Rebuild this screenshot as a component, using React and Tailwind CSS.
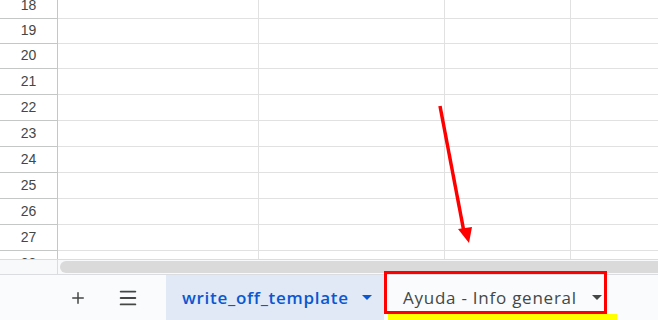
import { Plus, Menu } from 'lucide-react';

const ROWS = [
  { n: 18, h: 'h-[19px]' },
  { n: 19, h: 'h-[25px]' },
  { n: 20, h: 'h-[25px]' },
  { n: 21, h: 'h-[26px]' },
  { n: 22, h: 'h-[26px]' },
  { n: 23, h: 'h-[26px]' },
  { n: 24, h: 'h-[26px]' },
  { n: 25, h: 'h-[26px]' },
  { n: 26, h: 'h-[26px]' },
  { n: 27, h: 'h-[26px]' },
  { n: 28, h: 'h-[26px]' },
];

function Caret({ className }) {
  return (
    <svg width="10" height="5" viewBox="0 0 10 5" className={className}>
      <path d="M0 0h10L5 5z" fill="currentColor" />
    </svg>
  );
}

export default function App() {
  return (
    <div className="relative w-[658px] h-[320px] overflow-hidden bg-white font-['Liberation_Sans',Arial,sans-serif]">
      {/* grid */}
      <div className="h-[259px] overflow-hidden">
        {ROWS.map((r) => (
          <div key={r.n} className={`flex ${r.h}`}>
            <div className="w-[58px] shrink-0 border-r border-b border-[#c4c7c5] flex items-end justify-center pb-[6px] text-[14px] text-[#444746] leading-none">
              {r.n}
            </div>
            <div className="w-[201px] shrink-0 border-r border-b border-[#e1e1e1]" />
            <div className="w-[186px] shrink-0 border-r border-b border-[#e1e1e1]" />
            <div className="w-[126px] shrink-0 border-r border-b border-[#e1e1e1]" />
            <div className="flex-1 border-b border-[#e1e1e1]" />
          </div>
        ))}
      </div>

      {/* horizontal scrollbar */}
      <div className="flex h-[16px] border-t border-b border-[#dadce0] bg-[#f8f9fa]">
        <div className="w-[58px] shrink-0 border-r border-[#dadce0]" />
        <div className="flex-1 pl-[2px] py-[1px]">
          <div className="h-[12px] w-full rounded-l-full bg-[#dadada]" />
        </div>
      </div>

      {/* sheet tabs bar */}
      <div className="flex h-[45px] bg-[#f9fbfd] items-stretch font-['Open_Sans',sans-serif]">
        <div className="w-[166px] shrink-0 flex items-center">
          <Plus className="ml-[69px] text-[#444746]" size={18} strokeWidth={2} />
          <Menu className="ml-[30px] text-[#444746]" size={22} strokeWidth={2} />
        </div>
        <div className="w-[218px] shrink-0 bg-[#e1e9f7] flex items-center pl-[16px] text-[17px] font-semibold tracking-[0.7px] text-[#0b57d0]">
          write_off_template
          <Caret className="ml-auto mr-[12px] text-[#0b57d0]" />
        </div>
        <div className="relative w-[222px] shrink-0 flex items-center pl-[19px] text-[17px] text-[#444746] tracking-[0.75px]">
          Ayuda - Info general
          <Caret className="ml-auto mr-[4px] text-[#444746]" />
          <div className="absolute left-0 -top-[4px] w-[223px] h-[43px] border-[3px] border-[#ff0000]" />
          <div className="absolute left-[4px] top-[39px] w-[229px] h-[6px] bg-[#ffff00]" />
        </div>
      </div>

      {/* annotation arrow */}
      <svg className="absolute left-0 top-0" width="658" height="320">
        <line x1="440" y1="106" x2="464" y2="232" stroke="#ff0000" strokeWidth="3.5" />
        <path d="M458 229 L472 227 L469 243 Z" fill="#ff0000" />
      </svg>
    </div>
  );
}
